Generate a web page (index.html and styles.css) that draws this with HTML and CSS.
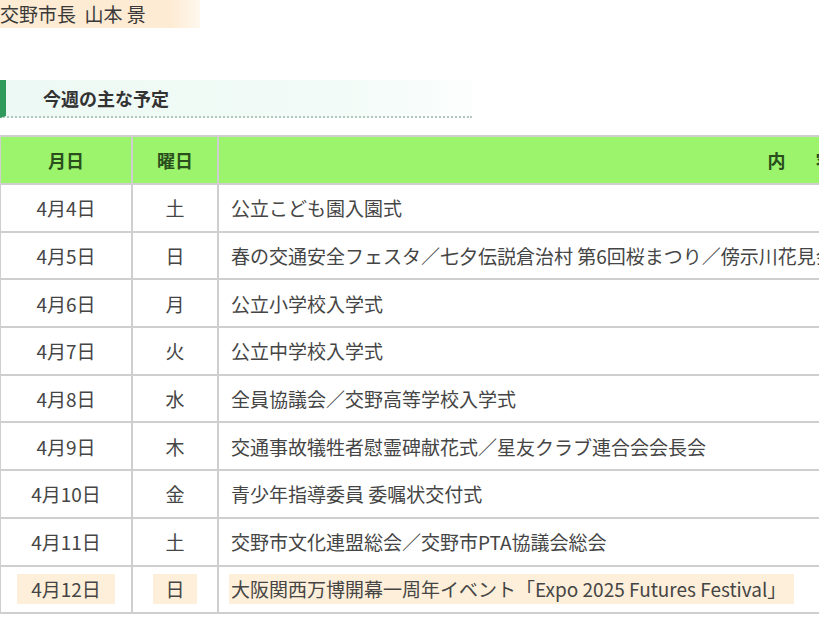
FILE: index.html
```html
<!DOCTYPE html>
<html lang="ja">
<head>
<meta charset="utf-8">
<link rel="stylesheet" href="styles.css">
</head>
<body>
<div class="page">
  <p class="signature"><span class="hl">交野市長&nbsp;&nbsp;山本 景</span></p>
  <h2 class="section-title"><span>今週の主な予定</span></h2>
  <table class="schedule">
    <thead>
      <tr><th class="c-date">月日</th><th class="c-day">曜日</th><th class="c-body head-body">内　容</th></tr>
    </thead>
    <tbody>
      <tr><td class="c-date">4月4日</td><td class="c-day">土</td><td class="c-body">公立こども園入園式</td></tr>
      <tr><td class="c-date">4月5日</td><td class="c-day">日</td><td class="c-body">春の交通安全フェスタ／七夕伝説倉治村 第6回桜まつり／傍示川花見会</td></tr>
      <tr><td class="c-date">4月6日</td><td class="c-day">月</td><td class="c-body">公立小学校入学式</td></tr>
      <tr><td class="c-date">4月7日</td><td class="c-day">火</td><td class="c-body">公立中学校入学式</td></tr>
      <tr><td class="c-date">4月8日</td><td class="c-day">水</td><td class="c-body">全員協議会／交野高等学校入学式</td></tr>
      <tr><td class="c-date">4月9日</td><td class="c-day">木</td><td class="c-body">交通事故犠牲者慰霊碑献花式／星友クラブ連合会会長会</td></tr>
      <tr><td class="c-date">4月10日</td><td class="c-day">金</td><td class="c-body">青少年指導委員 委嘱状交付式</td></tr>
      <tr><td class="c-date">4月11日</td><td class="c-day">土</td><td class="c-body">交野市文化連盟総会／交野市PTA協議会総会</td></tr>
      <tr class="today"><td class="c-date"><span class="mark">4月12日</span></td><td class="c-day"><span class="mark">日</span></td><td class="c-body"><span class="mark">大阪関西万博開幕一周年イベント「Expo 2025 Futures Festival」</span></td></tr>
    </tbody>
  </table>
</div>
</body>
</html>
```

FILE: styles.css
```css
html, body {
  margin: 0;
  padding: 0;
  background: #ffffff;
  overflow: hidden;
}
body {
  font-family: "Noto Sans CJK JP", "Noto Sans", sans-serif;
  color: #444444;
}
.page {
  width: 819px;
  height: 627px;
  overflow: hidden;
}
.signature {
  margin: 0;
  height: 28px;
  font-size: 19px;
  line-height: 28px;
}
.signature .hl {
  display: inline-block;
  width: 200px;
  margin-left: -2px;
  padding-left: 2px;
  background: linear-gradient(90deg, #fdebd3 0%, #fdebd3 85%, #fff8ee 100%);
  color: #3a3a3a;
}
.section-title {
  margin: 52px 0 0 0;
  width: 472px;
  height: 38px;
  box-sizing: border-box;
  border-left: 6px solid #2f9a5c;
  border-bottom: 2px dotted #b3c7bd;
  background: linear-gradient(90deg, #edf9f4 0%, #f2fbf7 70%, #fbfefd 100%);
  font-size: 18px;
  font-weight: 700;
  color: #333333;
  line-height: 36px;
  padding-left: 37px;
}
.schedule {
  margin-top: 17px;
  margin-left: -1px;
  border-collapse: collapse;
  width: 1385px;
  table-layout: fixed;
  font-size: 19px;
}
.schedule th, .schedule td {
  border: 2px solid #cfcfcf;
  height: 45.7px;
  padding: 0;
}
.schedule th {
  background: #9cf46d;
  color: #2a4f1c;
  font-weight: 700;
  font-size: 18px;
  height: 46px;
}
.schedule td {
  color: #454545;
}
.c-date { width: 130px; text-align: center; }
.c-day { width: 84px; text-align: center; }
.schedule td.c-body { text-align: left; padding-left: 12px; }
.schedule th.c-body { text-align: center; }
.schedule th.head-body { letter-spacing: 6px; padding-left: 6px; }
.mark {
  display: inline-block;
  background: #fdefda;
  padding: 2px 12px;
  line-height: 26px;
}
.c-date .mark { padding: 2px 14px; }
.c-body .mark { padding: 2px 8px 2px 2px; margin-left: -2px; }
```
